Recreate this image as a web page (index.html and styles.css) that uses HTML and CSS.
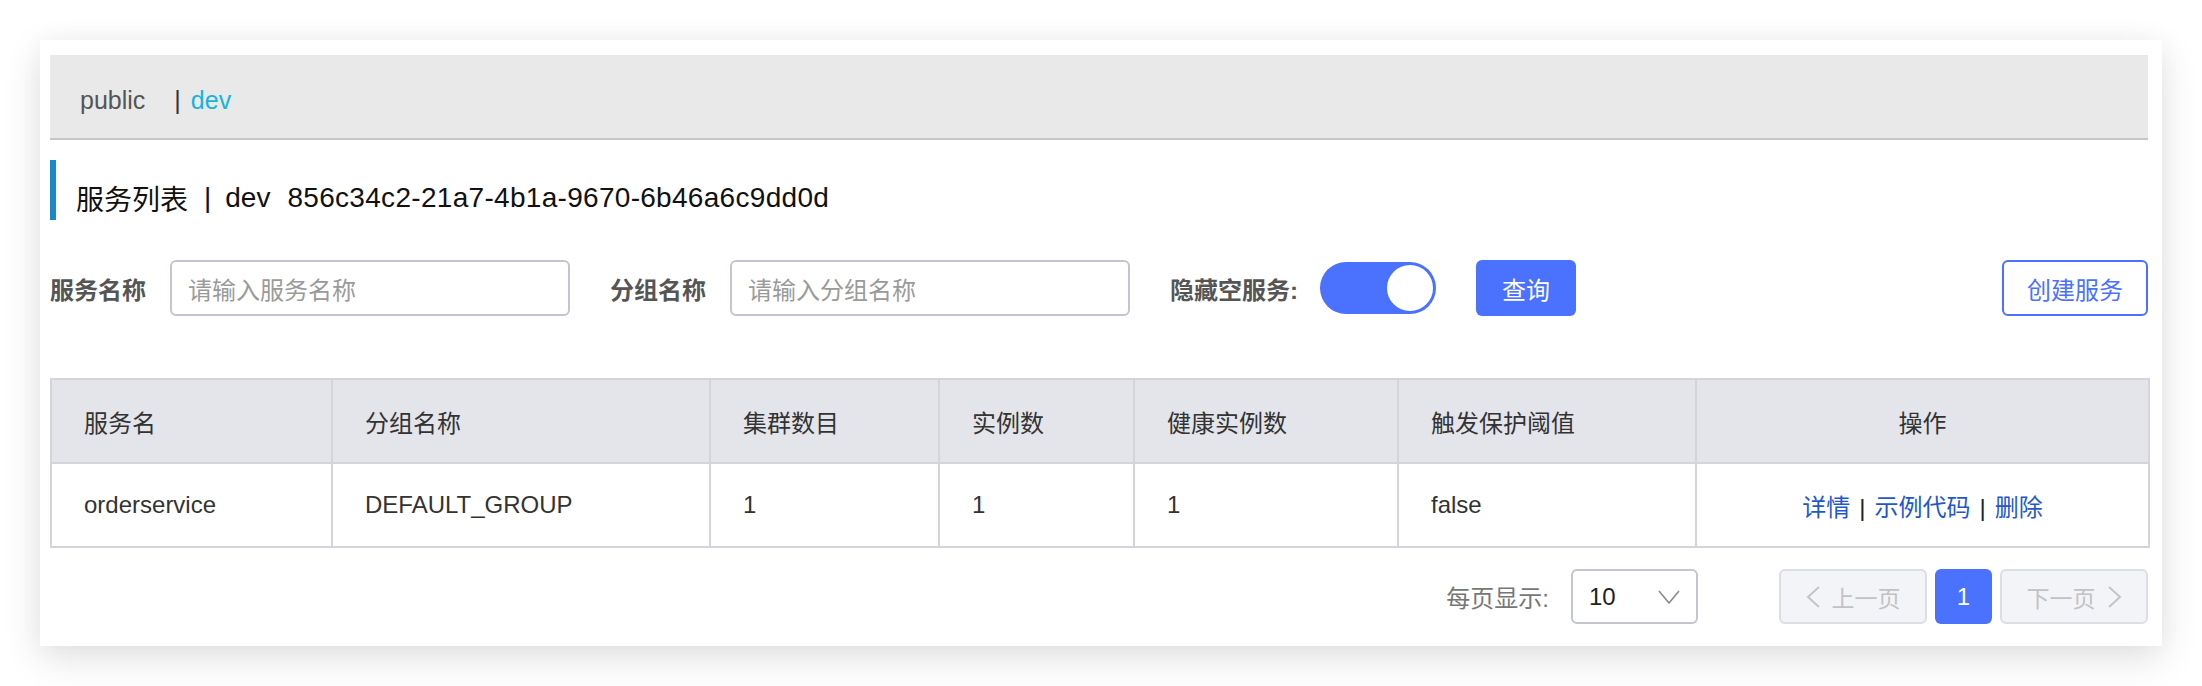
FILE: index.html
```html
<!DOCTYPE html>
<html lang="zh-CN">
<head>
<meta charset="utf-8">
<title>服务列表</title>
<link rel="stylesheet" href="styles.css">
</head>
<body>
<div class="card">
  <div class="ns-bar">
    <span class="ns-item">public</span>
    <span class="ns-sep">|</span>
    <span class="ns-item ns-active">dev</span>
  </div>

  <div class="page-title">
    <span class="pt-main">服务列表</span>
    <span class="pt-sep">|</span>
    <span class="pt-ns">dev</span>
    <span class="pt-id">856c34c2-21a7-4b1a-9670-6b46a6c9dd0d</span>
  </div>

  <div class="filter-row">
    <label class="f-label">服务名称</label>
    <div class="f-input"><span class="ph">请输入服务名称</span></div>
    <label class="f-label f-gap">分组名称</label>
    <div class="f-input"><span class="ph">请输入分组名称</span></div>
    <label class="f-label f-gap">隐藏空服务:</label>
    <div class="switch"><span class="knob"></span></div>
    <button class="btn-primary">查询</button>
    <button class="btn-outline">创建服务</button>
  </div>

  <table class="svc-table">
    <colgroup>
      <col class="c1"><col class="c2"><col class="c3"><col class="c4"><col class="c5"><col class="c6"><col class="c7">
    </colgroup>
    <thead>
      <tr>
        <th>服务名</th>
        <th>分组名称</th>
        <th>集群数目</th>
        <th>实例数</th>
        <th>健康实例数</th>
        <th>触发保护阈值</th>
        <th class="center">操作</th>
      </tr>
    </thead>
    <tbody>
      <tr>
        <td>orderservice</td>
        <td>DEFAULT_GROUP</td>
        <td>1</td>
        <td>1</td>
        <td>1</td>
        <td>false</td>
        <td class="center ops"><a>详情</a><span class="op-sep">|</span><a>示例代码</a><span class="op-sep">|</span><a>删除</a></td>
      </tr>
    </tbody>
  </table>

  <div class="pager">
    <span class="pg-label">每页显示:</span>
    <div class="pg-select">
      <span>10</span>
      <svg width="22" height="14" viewBox="0 0 22 14"><path d="M1 1 L11 13 L21 1" fill="none" stroke="#8a8a8a" stroke-width="1.6"/></svg>
    </div>
    <div class="pg-btns">
      <button class="pg-nav">
        <svg width="14" height="22" viewBox="0 0 14 22"><path d="M13 1 L2 11 L13 21" fill="none" stroke="#c4c4c4" stroke-width="2"/></svg>
        <span>上一页</span>
      </button>
      <button class="pg-cur">1</button>
      <button class="pg-nav">
        <span>下一页</span>
        <svg width="14" height="22" viewBox="0 0 14 22"><path d="M1 1 L12 11 L1 21" fill="none" stroke="#c4c4c4" stroke-width="2"/></svg>
      </button>
    </div>
  </div>
</div>
</body>
</html>
```

FILE: styles.css
```css
* { box-sizing: border-box; }

html, body {
  margin: 0;
  padding: 0;
  background: #ffffff;
}

body {
  width: 2202px;
  height: 686px;
  overflow: hidden;
  font-family: "Liberation Sans", "Noto Sans CJK SC", sans-serif;
  color: #333333;
}

.card {
  margin: 40px 40px 0 40px;
  width: 2122px;
  height: 606px;
  background: #ffffff;
  padding: 15px 14px 0 10px;
  box-shadow: 0 12px 36px rgba(0, 0, 0, 0.12), 0 0 24px rgba(0, 0, 0, 0.03);
}

/* namespace bar */
.ns-bar {
  height: 85px;
  background: #e9e9e9;
  border-bottom: 2px solid #c6c6c6;
  display: flex;
  align-items: center;
  padding: 8px 0 0 30px;
  font-size: 25px;
}

.ns-item { color: #555555; }
.ns-sep { color: #333333; margin: 0 10px 0 29px; }
.ns-active { color: #1ab3d8; }

/* page title */
.page-title {
  margin-top: 20px;
  height: 60px;
  border-left: 6px solid #1b88c8;
  padding: 15px 0 0 20px;
  display: flex;
  align-items: center;
  font-size: 28px;
  color: #111111;
}

.pt-sep { margin: 0 14px 0 16px; }
.pt-id { margin-left: 17px; letter-spacing: 0.3px; }

/* filter row */
.filter-row {
  margin-top: 40px;
  height: 56px;
  display: flex;
  align-items: center;
}

.f-label {
  font-size: 24px;
  font-weight: bold;
  color: #555555;
  margin-right: 24px;
}

.f-gap { margin-left: 40px; }

.f-input {
  width: 400px;
  height: 56px;
  border: 2px solid #c4c6cf;
  border-radius: 6px;
  display: flex;
  align-items: center;
  padding-left: 16px;
}

.ph {
  font-size: 24px;
  color: #9a9a9a;
}

.switch {
  width: 116px;
  height: 52px;
  border-radius: 26px;
  background: #4a71ff;
  display: flex;
  justify-content: flex-end;
  align-items: center;
  padding: 0 1px;
  margin-left: -2px;
}

.knob {
  width: 50px;
  height: 50px;
  border-radius: 50%;
  background: #ffffff;
  border: 2px solid #4a71ff;
}

.btn-primary {
  margin-left: 40px;
  width: 100px;
  height: 56px;
  border: none;
  border-radius: 6px;
  background: #4a71ff;
  color: #ffffff;
  font-family: inherit;
  font-size: 24px;
  padding: 0;
}

.btn-outline {
  margin-left: auto;
  width: 146px;
  height: 56px;
  border: 2px solid #4a71ff;
  border-radius: 6px;
  background: #ffffff;
  color: #4a71ff;
  font-family: inherit;
  font-size: 24px;
  padding: 0;
}

/* table */
.svc-table {
  margin-top: 62px;
  width: 2098px;
  border-collapse: collapse;
  table-layout: fixed;
  font-size: 24px;
}

.c1 { width: 281px; }
.c2 { width: 378px; }
.c3 { width: 229px; }
.c4 { width: 195px; }
.c5 { width: 264px; }
.c6 { width: 298px; }
.c7 { width: 453px; }

.svc-table th,
.svc-table td {
  border: 2px solid #d3d5db;
  height: 84px;
  padding: 0 0 0 32px;
  text-align: left;
  font-weight: normal;
  color: #333333;
}

.svc-table th {
  background: #e4e5ea;
}

.svc-table .center {
  text-align: center;
  padding: 0;
}

.ops a { color: #1f58cc; }
.op-sep { color: #222222; margin: 0 9px; }

/* pager */
.pager {
  margin-top: 21px;
  height: 55px;
  display: flex;
  justify-content: flex-end;
  align-items: center;
}

.pg-label {
  font-size: 24px;
  color: #777777;
  margin-right: 22px;
}

.pg-select {
  width: 127px;
  height: 55px;
  border: 2px solid #c4c6cf;
  border-radius: 6px;
  display: flex;
  align-items: center;
  justify-content: space-between;
  padding: 0 16px 0 16px;
  font-size: 24px;
  color: #222222;
}

.pg-btns {
  margin-left: 81px;
  display: flex;
  align-items: center;
  gap: 8px;
}

.pg-nav {
  width: 148px;
  height: 55px;
  border: 2px solid #dcdee3;
  border-radius: 6px;
  background: #f3f4f8;
  color: #c2c2c2;
  font-family: inherit;
  font-size: 23px;
  display: flex;
  align-items: center;
  justify-content: center;
  gap: 12px;
  padding: 0;
}

.pg-cur {
  width: 57px;
  height: 55px;
  border: none;
  border-radius: 6px;
  background: #4a71ff;
  color: #ffffff;
  font-family: inherit;
  font-size: 24px;
  padding: 0;
}
```
